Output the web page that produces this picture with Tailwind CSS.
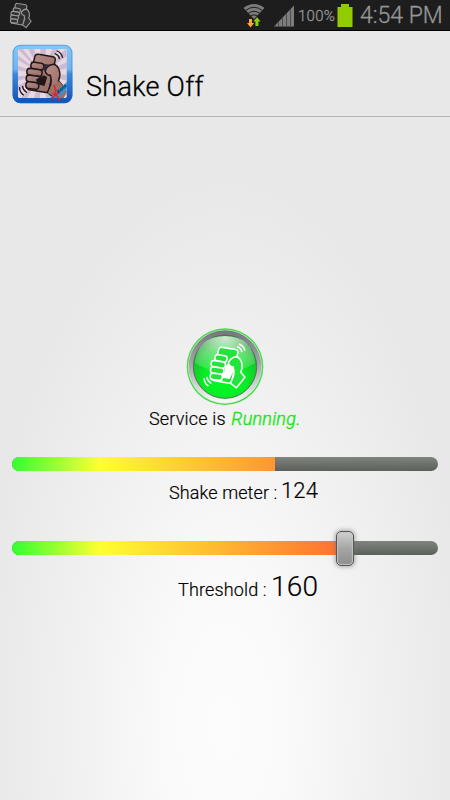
<!DOCTYPE html>
<html lang="en">
<head>
<meta charset="utf-8">
<title>Shake Off</title>
<script src="https://cdn.jsdelivr.net/npm/@tailwindcss/browser@4"></script>
</head>
<body class="w-[450px] h-[800px] overflow-hidden flex flex-col font-['Roboto',sans-serif] font-light text-black bg-[radial-gradient(ellipse_245px_550px_at_225px_725px,#fcfcfc_0%,#fafafa_25%,#f1f1f1_60%,#e8e8e8_100%)]">
<svg class="absolute w-0 h-0">
  <defs>
    <g id="hand" stroke-linejoin="round" stroke-linecap="round">
      <path d="M64 54L68 38Q70 29 80 31L122 38Q131 40 129 49L111 136Q108 147 97 145L51 137Q41 134 44 124Z"/>
      <path d="M99 83Q103 65 122 61Q137 62 142 82Q145 97 139 110L152 126L125 160L106 146L116 120Q119 106 114 93Q106 96 99 83Z"/>
      <rect x="56" y="56" width="39" height="20" rx="9" transform="rotate(9 75 66)"/>
      <rect x="44" y="75" width="46" height="20" rx="9" transform="rotate(8 66 85)"/>
      <rect x="42" y="95" width="43" height="20" rx="9" transform="rotate(7 64 105)"/>
      <rect x="41" y="115" width="39" height="20" rx="9" transform="rotate(7 62 125)"/>
    </g>
    <g id="waves" fill="none" stroke-linecap="round">
      <path d="M135 21Q149 27 151 40M129 29Q139 33 142 44M22 131Q23 146 34 153M31 127Q32 137 43 145"/>
    </g>
    <linearGradient id="frame" x2="0" y2="1"><stop stop-color="#86c6f6"/><stop offset=".42" stop-color="#72b3ee"/><stop offset=".5" stop-color="#3c89dc"/><stop offset="1" stop-color="#1250b5"/></linearGradient>
    <linearGradient id="skin" x2="1" y2="1"><stop stop-color="#b98f88"/><stop offset="1" stop-color="#94685f"/></linearGradient>
    <linearGradient id="metal" x2="0" y2="1"><stop stop-color="#74777a"/><stop offset=".45" stop-color="#a2a4a7"/><stop offset="1" stop-color="#fafafa"/></linearGradient>
    <radialGradient id="green" cx=".5" cy=".7" r=".65"><stop stop-color="#02fa22"/><stop offset=".5" stop-color="#08ee25"/><stop offset=".8" stop-color="#14c92a"/><stop offset="1" stop-color="#128f25"/></radialGradient>
    <radialGradient id="gloss" cx=".5" cy=".05" r=".9"><stop stop-color="#fff" stop-opacity=".8"/><stop offset=".5" stop-color="#fff" stop-opacity=".4"/><stop offset="1" stop-color="#fff" stop-opacity=".16"/></radialGradient>
    <clipPath id="tile"><rect x="17" y="15" width="147" height="147" rx="5"/></clipPath>
  </defs>
</svg>

<div class="h-[31px] shrink-0 bg-[#1d1d1d] border-b border-black flex items-center text-[#979797]">
  <svg class="ml-[6px] w-[28px] h-[30px] shrink-0" viewBox="0 0 28 30">
    <g transform="translate(-3.3 -2.3) scale(.187)" fill="#303030" stroke="#999" stroke-width="6"><use href="#hand"/></g>
  </svg>
  <div class="ml-auto flex items-center h-full">
    <svg class="w-[22px] h-[30px]" viewBox="0 0 22 30">
      <path d="M.5 8Q11 0 21.500 8L11 19Z" fill="#7c7c7c"/>
      <g fill="none" stroke="#1d1d1d" stroke-width="1"><path d="M2.500 10.500Q11 4 19.500 10.500M5 13.500Q11 9 17 13.500M7.500 16Q11 13.500 14.500 16"/></g>
      <path d="M6 19H9V23H11.200L7.500 27.500L4 23H6Z" fill="#ffa52d"/><path d="M12.400 26V21.500H10.300L14 17.300L17.600 21.500H15.400V26Z" fill="#8bd400"/>
    </svg>
    <svg class="ml-[8px] w-[22px] h-[30px]" viewBox="0 0 22 30">
      <path d="M1 26.500L21 5.500V26.500Z" fill="#7d7d7d"/><path d="M5.500 21V27M9.500 17V27M13.500 13V27M17.500 9V27" stroke="#4d4d4d"/>
    </svg>
    <span class="ml-[3px] w-[38px] text-[15px] leading-[30px] pt-[2px] tracking-[0.25px] [-webkit-text-stroke:0.3px] whitespace-nowrap">100%</span>
    <svg class="w-[16px] h-[30px] ml-[1px]" viewBox="0 0 16 30"><path d="M4 4H12V7H15.500V27H.5V7H4Z" fill="#91cc00"/></svg>
    <span class="ml-[7px] w-[90px] text-[23px] leading-[30px] pt-[2px] font-light [-webkit-text-stroke:0.3px] whitespace-nowrap">4:54 PM</span>
  </div>
</div>

<header class="h-[86px] shrink-0 bg-[#e8e8e8] border-b border-[#b6b6b6] flex pl-[12px]">
  <svg class="mt-[13px] w-[61px] h-[60px]" viewBox="0 0 182 180">
    <rect x="1" y="2" width="180" height="176" rx="24" fill="url(#frame)"/>
    <rect x="3" y="4" width="176" height="172" rx="22" fill="none" stroke="#2c6fc4" stroke-opacity=".4" stroke-width="3"/>
    <g clip-path="url(#tile)">
      <rect x="17" y="15" width="147" height="147" fill="#e9d8df"/>
      <path fill="#cbbad2" d="M90 90L17 15H32ZM90 90L48 15H66ZM90 90L84 15H102ZM90 90L120 15H140ZM90 90L160 15L164 36ZM90 90L164 54V73ZM90 90L164 92V110ZM90 90L17 34V48ZM90 90L17 65V79ZM90 90L17 97V110ZM90 90L17 125V140ZM90 90L26 162H44ZM90 90L65 162H83ZM90 90L102 162H120Z"/>
      <g fill="url(#skin)" stroke="#211719" stroke-width="4.500"><use href="#hand"/></g>
      <path d="M118 125L141 112L166 142L150 170L107 148Z" fill="#9b7066"/>
      <path d="M72 106L96 94L105 100L97 126L75 121Z" fill="#20171a"/>
      <path d="M96 60L118 62L106 70L98 82L92 77Z" fill="#352b35"/>
      <use href="#waves" stroke="#251c25" stroke-width="4"/>
      <path d="M110 165L168 110V130L134 165Z" fill="#259ae0"/>
    </g>
    <path d="M125 122Q132 134 130 148L143 170M119 163Q132 151 143 142M121 148L135 154" stroke="#ee1e2b" stroke-width="4.500" fill="none"/>
    <text x="139" y="150" transform="rotate(-42 139 150)" class="font-['Roboto'] font-bold italic text-[16px]" fill="#17334c">Xeno</text>
  </svg>
  <h1 class="ml-[13px] mt-[39px] text-[27px] leading-[34px] tracking-[0.3px] [-webkit-text-stroke:0.3px] whitespace-nowrap">Shake Off</h1>
</header>

<main class="flex flex-col pt-[210px] shrink-0 [-webkit-text-stroke:0.2px]">
  <svg class="w-[80px] h-[80px] ml-[185px]" viewBox="0 0 240 240">
    <circle cx="120" cy="119" r="115" fill="#42dc48"/>
    <circle cx="120" cy="119" r="111" fill="#cfe8cf"/>
    <circle cx="120" cy="119" r="109" fill="url(#metal)"/>
    <circle cx="120" cy="119" r="95" fill="url(#green)" stroke="#4b7653" stroke-width="3"/>
    <path d="M29 108Q39 27 120 27Q201 27 211 108Q181 130 120 134Q60 130 29 108Z" fill="url(#gloss)"/>
    <g transform="translate(37 32) scale(.94)">
      <g fill="#22e53c" stroke="#fff" stroke-width="5"><use href="#hand"/></g>
      <path d="M87 93L97 84L113 93L115 108L103 132L78 128L80 114L88 108Z" fill="#fff"/>
      <use href="#waves" stroke="#fff" stroke-width="5"/>
    </g>
  </svg>
  <p class="ml-[149px] h-[26px] leading-[24px] text-[18px] tracking-[0.17px] whitespace-nowrap">Service is <i class="text-[#16e616] ml-px tracking-[0.25px] [-webkit-text-stroke:0.4px]">Running.</i></p>

  <div class="mt-[24px] mx-[12px] h-[14px] rounded-full overflow-hidden bg-gradient-to-b from-[#80847e] to-[#5c605a]">
    <div class="w-[263px] h-full bg-[linear-gradient(90deg,#32ff32_0,#ffff32_88px,#ffad32_225px,#ff9632_263px)]"></div>
  </div>
  <p class="h-[70px] pl-[169px] pt-[3px] flex items-baseline whitespace-nowrap"><span class="relative top-px w-[112px] text-[18px] leading-[34px] tracking-[0.1px]">Shake meter :</span><span class="text-[22px] leading-[34px] tracking-[0.15px]">124</span></p>

  <div class="relative mx-[12px] h-[14px]">
    <div class="h-full rounded-full overflow-hidden bg-gradient-to-b from-[#80847e] to-[#5c605a]">
      <div class="w-[334px] h-full bg-[linear-gradient(90deg,#32ff32_0,#ffff32_88px,#ffad32_225px,#ff6c32_334px)]"></div>
    </div>
    <div class="absolute left-[324px] top-[-10px] w-[18px] h-[35px] rounded-[5px] border border-[#555] bg-gradient-to-b from-[#d0d0d0] via-[#a5a5a5] to-[#8e8e8e] shadow-[inset_0_0_1px_1px_#c5c5c5,0_0_4px_1px_#77777799]"></div>
  </div>
  <p class="pl-[178px] pt-[12px] flex items-baseline whitespace-nowrap"><span class="w-[93px] text-[18px] leading-[40px] tracking-[0.15px]">Threshold :</span><span class="text-[28px] leading-[40px] tracking-[0.2px]">160</span></p>
</main>
</body>
</html>
